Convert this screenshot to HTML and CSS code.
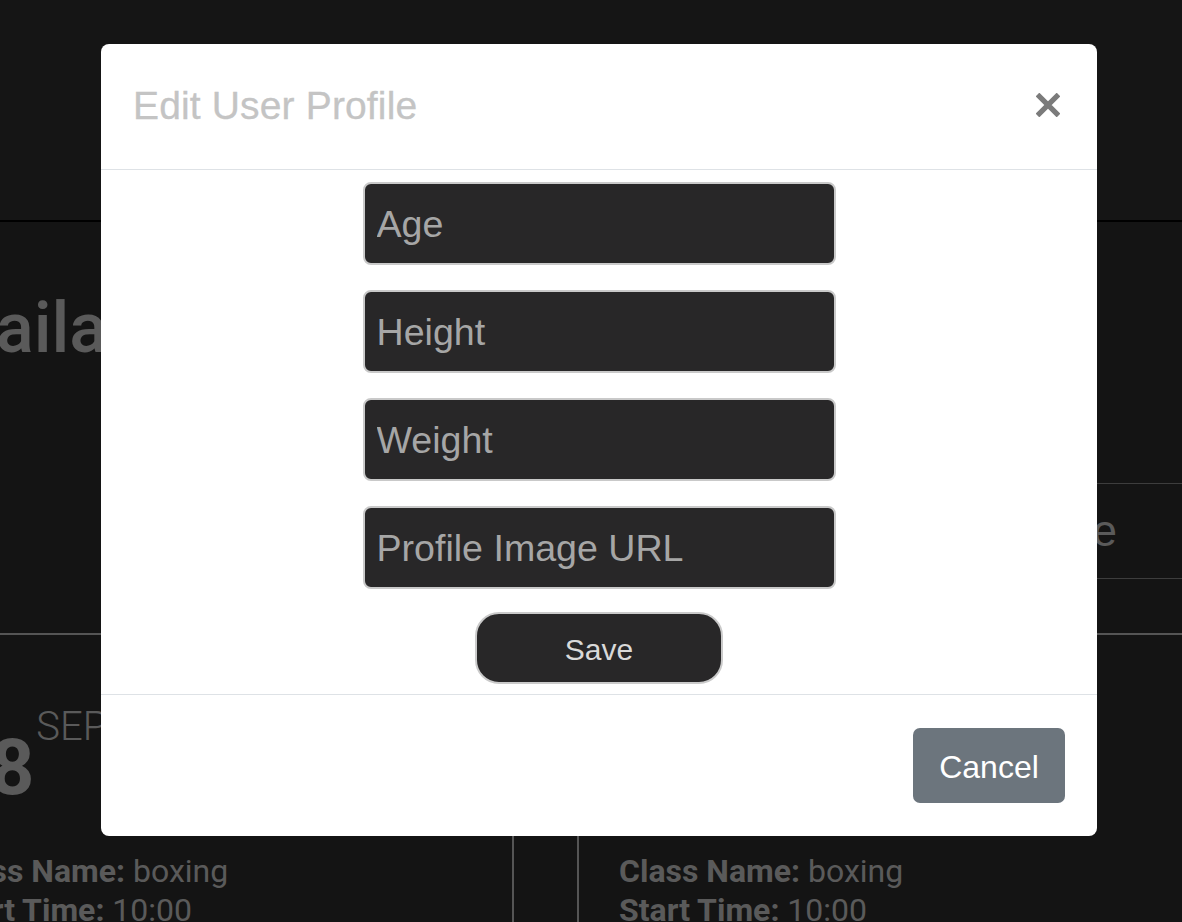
FILE: index.html
```html
<!DOCTYPE html>
<html lang="en">
<head>
<meta charset="utf-8">
<title>Edit User Profile</title>
<link rel="stylesheet" href="styles.css">
</head>
<body>
<div class="page">
  <header class="topbar"></header>
  <main class="content">
    <section class="hero">
      <h1 class="hero-title">Available Classes</h1>
      <div class="filter-row">
        <div class="filter-box">Choose a Date</div>
      </div>
    </section>
    <section class="cards">
      <article class="card">
        <div class="date"><span class="day">18</span><span class="month">SEP</span></div>
        <div class="info">
          <p><b>Class Name:</b> boxing</p>
          <p><b>Start Time:</b> 10:00</p>
        </div>
      </article>
      <article class="card">
        <div class="date"><span class="day">18</span><span class="month">SEP</span></div>
        <div class="info">
          <p><b>Class Name:</b> boxing</p>
          <p><b>Start Time:</b> 10:00</p>
        </div>
      </article>
    </section>
  </main>
</div>

<div class="backdrop">
  <div class="modal">
    <div class="modal-header">
      <h5 class="modal-title">Edit User Profile</h5>
      <button class="close" type="button" aria-label="Close">
        <svg width="24" height="24" viewBox="0 0 24 24"><path d="M1.5 1.5 L22.5 22.5 M22.5 1.5 L1.5 22.5" stroke="#7b7b7b" stroke-width="5.2" fill="none"/></svg>
      </button>
    </div>
    <div class="modal-body">
      <form class="profile-form">
        <div class="fields">
          <input class="field" type="text" placeholder="Age">
          <input class="field" type="text" placeholder="Height">
          <input class="field" type="text" placeholder="Weight">
          <input class="field" type="text" placeholder="Profile Image URL">
        </div>
        <button class="save" type="button">Save</button>
      </form>
    </div>
    <div class="modal-footer">
      <button class="cancel" type="button">Cancel</button>
    </div>
  </div>
</div>
</body>
</html>
```
FILE: styles.css
```css
* { box-sizing: border-box; }
html, body { margin: 0; height: 100%; }
body {
  background: #282828;
  font-family: Roboto, "Liberation Sans", sans-serif;
  overflow: hidden;
}
.page { width: 1182px; }
.topbar {
  height: 222px;
  background: #2a2a2a;
  border-bottom: 2px solid #000;
}
.hero {
  height: 413px;
  padding-top: 71px;
  border-bottom: 2px solid #aaaaaa;
}
.hero-title {
  margin: 0 0 0 -83px;
  font-size: 70px;
  line-height: 1;
  font-weight: 500;
  color: #b4b4b4;
  white-space: nowrap;
}
.filter-row {
  display: flex;
  justify-content: flex-end;
  margin-top: 120px;
}
.filter-box {
  width: 520px;
  height: 96px;
  border-top: 1px solid #7a7a7a;
  border-bottom: 1px solid #7a7a7a;
  display: flex;
  align-items: center;
  justify-content: flex-end;
  padding-right: 65px;
  font-family: "Liberation Sans", sans-serif;
  font-size: 44px;
  color: #b4b4b4;
}
.cards {
  display: grid;
  grid-template-columns: 612px 612px;
  column-gap: 63px;
  margin-left: -98px;
}
.card {
  border-left: 2px solid #aaaaaa;
  border-right: 2px solid #aaaaaa;
  padding: 72px 0 0 40px;
  color: #b4b4b4;
}
.date {
  display: flex;
  align-items: flex-start;
  gap: 2px;
  margin-left: 2px;
}
.day {
  margin-top: 23px;
  font-size: 77px;
  line-height: 1;
  font-weight: 700;
}
.month {
  font-size: 40px;
  line-height: 1;
  font-weight: 300;
}
.info { margin-top: 45px; }
.info p {
  margin: 0;
  font-size: 32px;
  line-height: 39px;
  white-space: nowrap;
}
.info b { font-weight: 700; }

.backdrop {
  position: fixed;
  inset: 0;
  background: rgba(0, 0, 0, 0.5);
  padding: 44px 0 0 101px;
}
.modal {
  width: 996px;
  background: #fff;
  border-radius: 8px;
  font-family: "Liberation Sans", Arial, sans-serif;
}
.modal-header {
  height: 126px;
  border-bottom: 1px solid #dee2e6;
  padding: 0 37px 0 32px;
  display: flex;
  align-items: center;
  justify-content: space-between;
}
.modal-title {
  margin: 0;
  font-size: 39px;
  font-weight: 400;
  line-height: 1.2;
  color: #c4c4c4;
  letter-spacing: 0.15px;
  -webkit-text-stroke: 0.3px #c4c4c4;
}
.close {
  background: none;
  border: 0;
  padding: 0;
  display: flex;
  margin-top: -3px;
}
.modal-body { padding: 12px 0 10px; }
.profile-form {
  display: flex;
  flex-direction: column;
  align-items: center;
  gap: 23px;
}
.fields {
  display: flex;
  flex-direction: column;
  gap: 25px;
}
.field {
  width: 473px;
  height: 83px;
  border: 2px solid #c9c9c9;
  border-radius: 8px;
  background: #282728;
  padding: 2px 12px 0;
  font-family: "Liberation Sans", Arial, sans-serif;
  font-size: 37.6px;
  color: #dddddd;
  outline: none;
}
.field::placeholder { color: #a6a6a6; opacity: 1; }
.save {
  width: 248px;
  height: 72px;
  border: 2px solid #cacaca;
  border-radius: 24px;
  background: #282728;
  color: #d9d9d9;
  font-family: "Liberation Sans", Arial, sans-serif;
  font-size: 30px;
  padding: 4px 0 0;
}
.modal-footer {
  border-top: 1px solid #dee2e6;
  padding: 33px 32px;
  display: flex;
  justify-content: flex-end;
}
.cancel {
  width: 152px;
  height: 75px;
  border: 0;
  border-radius: 7px;
  background: #6c757d;
  color: #fff;
  font-family: "Liberation Sans", Arial, sans-serif;
  font-size: 32px;
  padding: 4px 0 0;
}
```
